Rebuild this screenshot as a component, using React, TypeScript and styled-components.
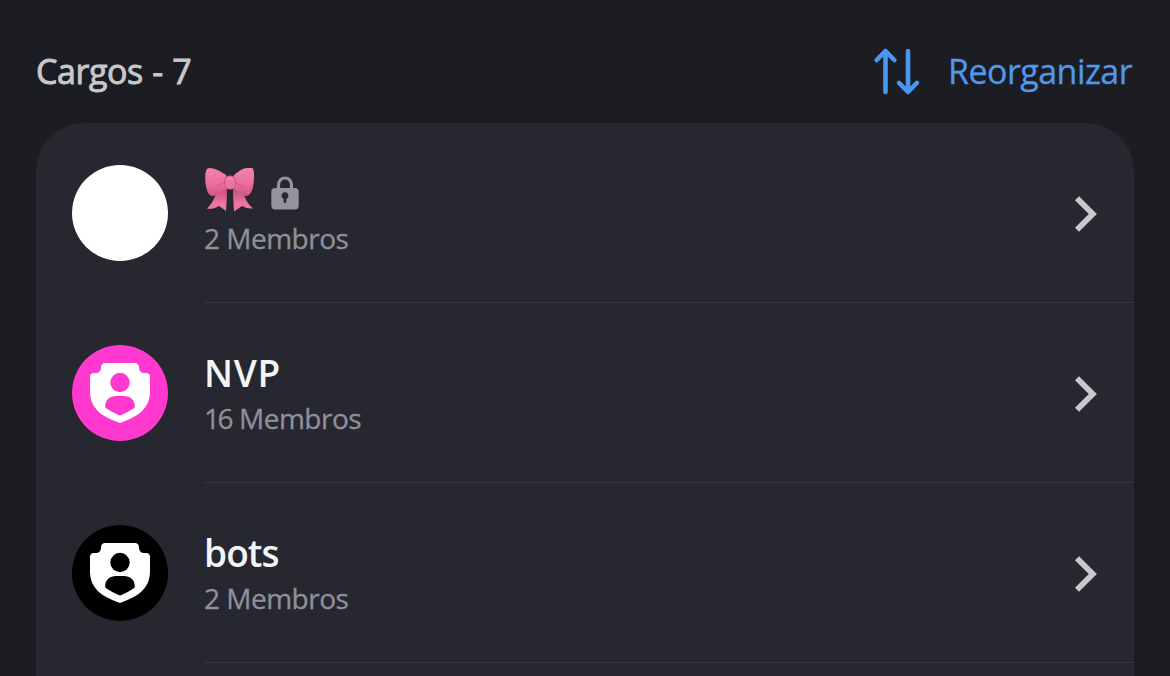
import React from "react";
import styled, { createGlobalStyle } from "styled-components";

const GlobalStyle = createGlobalStyle`
  * { box-sizing: border-box; }
  body {
    margin: 0;
    background: #1c1d22;
    font-family: "Open Sans", "Noto Sans", sans-serif;
    overflow: hidden;
  }
`;

const Screen = styled.main`
  height: 676px;
  padding: 0 36px;
  overflow: hidden;
  background: #1c1d22;
`;

const Header = styled.header`
  height: 123px;
  padding: 20px 2px 0 0;
  display: flex;
  align-items: center;
  justify-content: space-between;
`;

const Heading = styled.h1`
  margin: 0;
  font-size: 34px;
  line-height: 44px;
  font-weight: 400;
  letter-spacing: -0.4px;
  word-spacing: 1px;
  -webkit-text-stroke: 0.9px #c7c8ce;
  color: #c7c8ce;
  padding-bottom: 1px;
`;

const ReorderButton = styled.button`
  border: 0;
  padding: 0 0 1px;
  background: none;
  display: flex;
  align-items: center;
  gap: 28px;
  font: inherit;
  font-size: 34px;
  line-height: 44px;
  letter-spacing: -0.55px;
  -webkit-text-stroke: 0.3px #4f98ee;
  color: #4f98ee;
`;

const Card = styled.ul`
  list-style: none;
  margin: 0;
  padding: 0 0 0 36px;
  height: 600px;
  border-radius: 48px 48px 0 0;
  background: #27272f;
`;

const Row = styled.li`
  height: 180px;
  display: flex;
  align-items: stretch;
  gap: 36px;
`;

const Avatar = styled.div<{ $color: string }>`
  width: 96px;
  height: 96px;
  margin-top: 42px;
  flex: none;
  border-radius: 50%;
  background: ${(p) => p.$color};
  display: flex;
  align-items: center;
  justify-content: center;
`;

const Body = styled.div`
  flex: 1;
  display: flex;
  align-items: center;
  justify-content: space-between;
  border-bottom: 1px solid #36363f;
  padding-right: 36px;
`;

const Labels = styled.div`
  padding-top: 2px;
`;

const Name = styled.div<{ $tracking: number }>`
  height: 48px;
  display: flex;
  align-items: center;
  font-size: 37px;
  line-height: 48px;
  font-weight: 600;
  letter-spacing: ${(p) => p.$tracking}px;
  color: #f3f4f6;
`;

const Members = styled.div`
  font-size: 28px;
  line-height: 42px;
  letter-spacing: -0.5px;
  word-spacing: 1px;
  -webkit-text-stroke: 0.3px #8f909b;
  color: #8f909b;
`;

const Count = styled.span<{ $tracking: number }>`
  letter-spacing: ${(p) => p.$tracking}px;
`;

const Drawing = styled.svg`
  display: block;
  flex: none;
`;

const ReorderIcon = () => (
  <Drawing width="46" height="48" viewBox="0 0 46 48" fill="none" stroke="#4698f5" strokeWidth="4.6" strokeLinecap="round" strokeLinejoin="round">
    <path d="M11.500 45V4.500M2.700 13L11.500 4L20.300 13M34 4V44.500M25.200 36L34 45L42.800 36" />
  </Drawing>
);

const ShieldIcon = ({ hole }: { hole: string }) => (
  <Drawing width="60" height="60" viewBox="0 0 60 60">
    <path
      fill="#fff"
      d="M15 0H45Q48.500 0 49 4V5Q49.500 10 54 10H56Q60 10 60 14V28C60 43 52 52 31.500 59.500Q30 60.200 28.500 59.500C8 52 0 43 0 28V14Q0 10 4 10H6Q10.500 10 11 5V4Q11.500 0 15 0Z"
    />
    <circle cx="30" cy="19.500" r="9.700" fill={hole} />
    <path fill={hole} d="M15.200 43.500C15 37 20 33 26 33H34C40 33 45 37 44.800 43.500Q44.700 44.800 43.500 45.600Q37 50 31 52.200Q30 52.500 29 52.200Q23 50 16.500 45.600Q15.300 44.800 15.200 43.500Z" />
  </Drawing>
);

const BowIcon = () => (
  <Drawing width="50" height="44" viewBox="0 0 50 44">
    <defs>
      <linearGradient id="loop" x1="0" y1="0" x2="0" y2="1">
        <stop offset="0" stopColor="#f382aa" />
        <stop offset="0.550" stopColor="#eb6f9f" />
        <stop offset="1" stopColor="#cf5585" />
      </linearGradient>
      <linearGradient id="tail" x1="0" y1="0" x2="0" y2="1">
        <stop offset="0" stopColor="#c04b76" />
        <stop offset="0.700" stopColor="#ee76a3" />
        <stop offset="1" stopColor="#ee76a5" />
      </linearGradient>
    </defs>
    <path fill="url(#tail)" d="M12 22L22 19Q22 32 21 43Q17 40 14 38Q8 42 2 40.500Q9 34 12 22ZM28 19L38 22Q40 34 48 40.500Q42 41 37 38Q33 41 29 43.500Q28 31 28 19Z" />
    <path fill="url(#loop)" d="M21 7C15 3 10 0 4 0C0 0 0 9 0.500 15C1.500 22 3 28 8 28C14 27 19 23 22 19ZM29 7C34 3 38 0 42 0H47Q49 0 49 8C49 18 47 28 41 28C36 27 31 23 28 19Z" />
    <path fill="none" stroke="#cf5584" strokeWidth="1.200" strokeLinecap="round" opacity="0.600" d="M19 15Q15 16 12 18M31 15Q35 17 38 19" />
    <rect x="19.500" y="8" width="11" height="13" rx="4.500" fill="#ed74a1" stroke="#cd5280" strokeWidth="0.900" />
    <path d="M23 10.500H27" stroke="#fa92b6" strokeWidth="1.500" strokeLinecap="round" />
  </Drawing>
);

const RoleSymbols = styled.span`
  display: flex;
  align-items: flex-start;
  gap: 16px;
  padding-left: 1px;
  height: 50px;
`;

const LockSlot = styled.span`
  display: flex;
  padding-top: 8px;
`;

const LockIcon = () => (
  <Drawing width="28" height="34" viewBox="0 0 28 34">
    <path d="M7.500 15V8.500A6.300 6.300 0 0 1 20.500 8.500V15" fill="none" stroke="#9394a0" strokeWidth="3.200" />
    <rect x="0.300" y="12" width="27.400" height="21.500" rx="4" fill="#9394a0" />
    <path fill="#27272f" d="M14 16.300A3.400 3.400 0 0 0 12.600 22.800V25.500Q12.600 27 14 27Q15.400 27 15.400 25.500V22.800A3.400 3.400 0 0 0 14 16.300Z" />
  </Drawing>
);

const ChevronIcon = () => (
  <Drawing width="24" height="38" viewBox="0 0 24 38" fill="none" stroke="#c7c8ce" strokeWidth="5.8">
    <path d="M3 4.200L18.800 20L3 35.800" />
  </Drawing>
);

interface Role {
  name: React.ReactNode;
  tracking: number;
  count: number;
  color: string;
  shield: boolean;
}

const roles: Role[] = [
  {
    name: (
      <RoleSymbols>
        <BowIcon />
        <LockSlot><LockIcon /></LockSlot>
      </RoleSymbols>
    ),
    tracking: 0,
    count: 2,
    color: "#ffffff",
    shield: false,
  },
  { name: "NVP", tracking: 0.7, count: 16, color: "#ff38cf", shield: true },
  { name: "bots", tracking: -0.9, count: 2, color: "#000000", shield: true },
];

export default function App() {
  return (
    <>
      <GlobalStyle />
      <Screen>
        <Header>
          <Heading>Cargos - 7</Heading>
          <ReorderButton>
            <ReorderIcon />
            <span>Reorganizar</span>
          </ReorderButton>
        </Header>
        <Card>
          {roles.map((role, i) => (
            <Row key={i}>
              <Avatar $color={role.color}>{role.shield && <ShieldIcon hole={role.color} />}</Avatar>
              <Body>
                <Labels>
                  <Name $tracking={role.tracking}>{role.name}</Name>
                  <Members>
                    <Count $tracking={role.count > 9 ? -2.4 : -1.5}>{role.count}</Count> Membros
                  </Members>
                </Labels>
                <ChevronIcon />
              </Body>
            </Row>
          ))}
        </Card>
      </Screen>
    </>
  );
}
